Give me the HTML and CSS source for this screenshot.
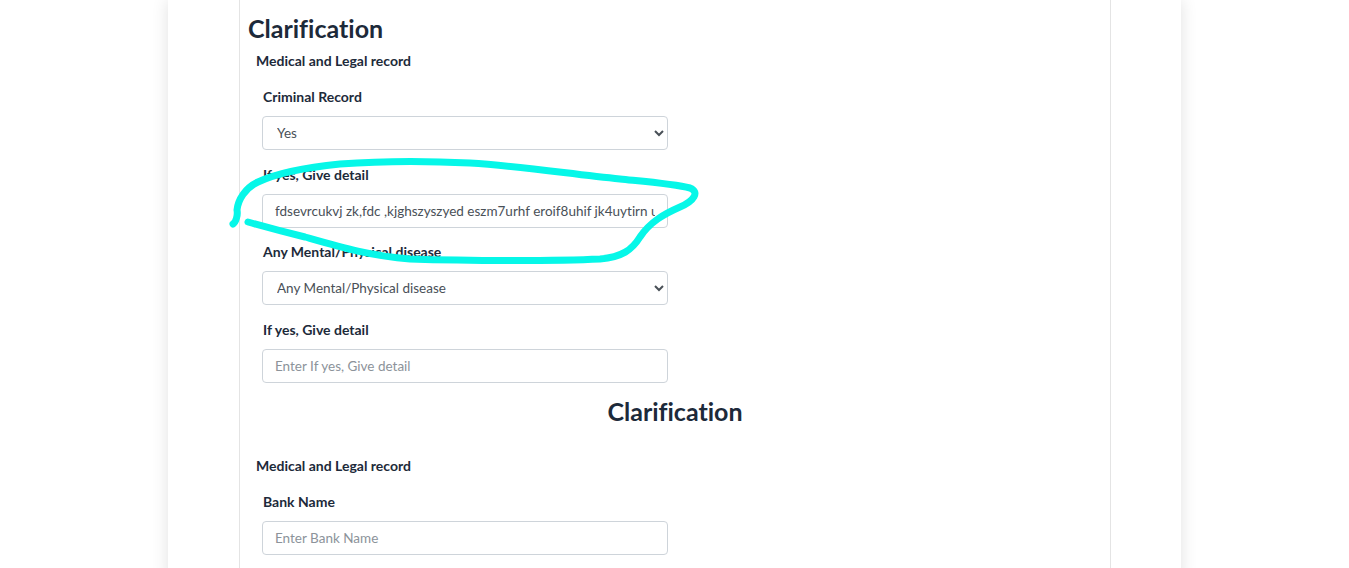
FILE: index.html
```html
<!DOCTYPE html>
<html lang="en">
<head>
<meta charset="utf-8">
<title>Clarification</title>
<link rel="stylesheet" href="styles.css">
</head>
<body>
<div class="page">
  <div class="inner">
    <h2 class="title">Clarification</h2>
    <div class="section">
      <h6 class="section-title">Medical and Legal record</h6>
      <div class="fields">
        <div class="group">
          <label class="label">Criminal Record</label>
          <select class="control select">
            <option>Yes</option>
          </select>
        </div>
        <div class="group">
          <label class="label">If yes, Give detail</label>
          <input class="control" type="text" value="fdsevrcukvj zk,fdc ,kjghszyszyed eszm7urhf eroif8uhif jk4uytirn uyhtirnuh">
        </div>
        <div class="group">
          <label class="label">Any Mental/Physical disease</label>
          <select class="control select">
            <option>Any Mental/Physical disease</option>
          </select>
        </div>
        <div class="group">
          <label class="label">If yes, Give detail</label>
          <input class="control" type="text" placeholder="Enter If yes, Give detail">
        </div>
      </div>
    </div>
    <h2 class="title title-center">Clarification</h2>
    <div class="section">
      <h6 class="section-title">Medical and Legal record</h6>
      <div class="fields">
        <div class="group">
          <label class="label">Bank Name</label>
          <input class="control" type="text" placeholder="Enter Bank Name">
        </div>
      </div>
    </div>
  </div>
</div>
<svg class="scribble" width="1349" height="568" viewBox="0 0 1349 568">
  <path d="M233 224 C 236 222, 238 215, 237 210 C 238 200, 245 188, 258 182 C 275 174, 300 168, 340 164 C 380 161, 430 161, 470 163 C 520 166, 570 174, 620 179 C 650 182, 675 184, 690 188 C 700 192, 694 201, 680 207 C 664 214, 650 222, 640 237 C 632 250, 622 257, 600 259 C 560 261, 470 261, 410 259 C 370 256, 340 247, 305 237 C 280 231, 262 226, 248 222"
        fill="none" stroke="#06f7e8" stroke-width="7" stroke-linecap="round" stroke-linejoin="round"/>
</svg>
</body>
</html>
```

FILE: styles.css
```css
html, body {
  margin: 0;
  padding: 0;
  background: #ffffff;
}

body {
  font-family: Lato, "Source Sans Pro", "Liberation Sans", sans-serif;
  font-variant-ligatures: none;
  color: #212529;
  position: relative;
  height: 568px;
  overflow: hidden;
}

.page {
  width: 1013px;
  margin: 0 auto;
  min-height: 568px;
  background: #ffffff;
  box-shadow: 0 0 16px rgba(0, 0, 0, 0.12);
}

.inner {
  margin: 0 70px 0 71px;
  min-height: 568px;
  border-left: 1px solid #e4e4e4;
  border-right: 1px solid #e4e4e4;
  padding: 13px 8px 0 8px;
}

.title {
  margin: 0 0 6px 0;
  font-size: 25px;
  line-height: 31px;
  font-weight: 700;
  color: #1d2a3a;
}

.title-center {
  text-align: center;
  margin-bottom: 28px;
}

.section {
  padding-left: 8px;
}

.section-title {
  margin: 0;
  font-size: 14px;
  line-height: 21px;
  font-weight: 700;
  color: #1d2a3a;
}

.fields {
  padding: 15px 0 0 6px;
  display: flex;
  flex-direction: column;
}

.group {
  display: flex;
  flex-direction: column;
  align-items: flex-start;
  margin-bottom: 13.5px;
}

.label {
  display: block;
  font-size: 14px;
  line-height: 21px;
  font-weight: 700;
  color: #1d2a3a;
  margin: 0 0 9px 1px;
}

.control {
  box-sizing: border-box;
  width: 406px;
  height: 34px;
  padding: 0 12px;
  border: 1px solid #ced4da;
  border-radius: 4px;
  background: #ffffff;
  font-family: Lato, "Source Sans Pro", "Liberation Sans", sans-serif;
  font-variant-ligatures: none;
  font-size: 13.5px;
  color: #495057;
  outline: none;
  margin: 0;
}

.control::placeholder {
  color: #8c939a;
}

.select {
  padding-left: 10px;
}

.scribble {
  position: absolute;
  left: 0;
  top: 0;
  pointer-events: none;
}
```
